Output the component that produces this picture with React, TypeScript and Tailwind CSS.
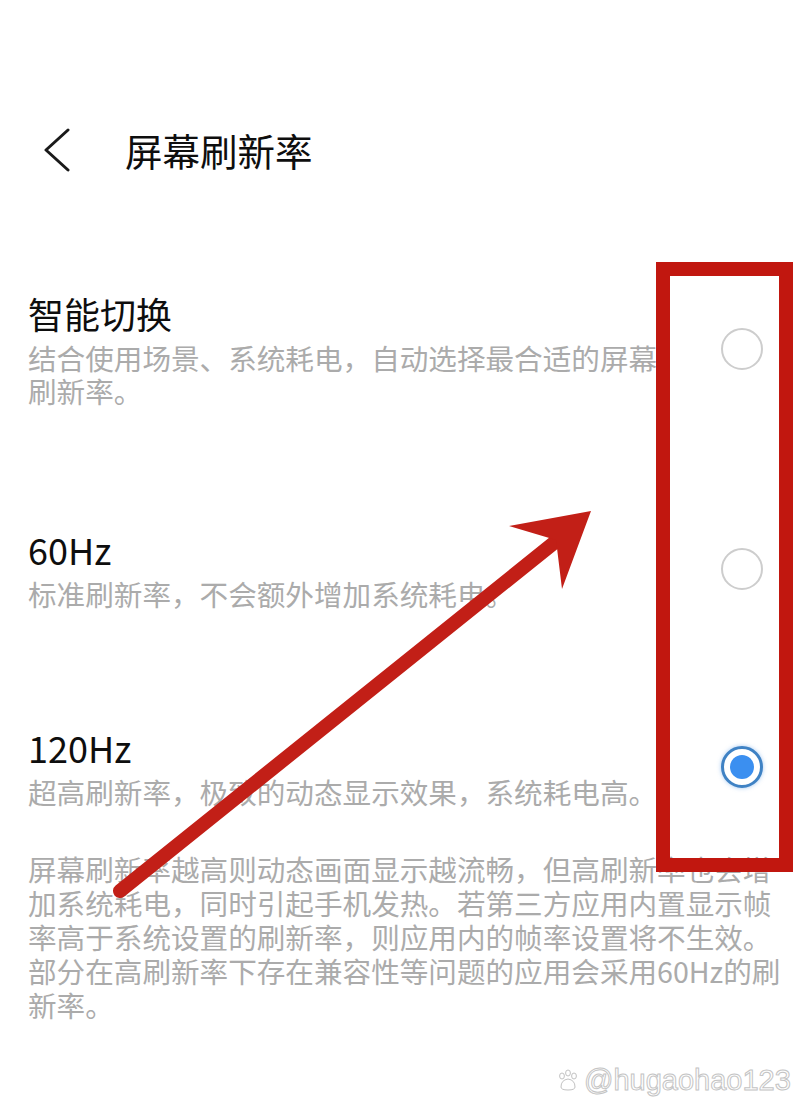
import React from "react";

const options = [
  {
    title: "智能切换",
    desc: "结合使用场景、系统耗电，自动选择最合适的屏幕刷新率。",
    selected: false,
    gap: "mt-[119px]",
  },
  {
    title: "60Hz",
    desc: "标准刷新率，不会额外增加系统耗电。",
    selected: false,
    gap: "mt-[120px]",
  },
  {
    title: "120Hz",
    desc: "超高刷新率，极致的动态显示效果，系统耗电高。",
    selected: true,
    gap: "mt-[115px]",
  },
];

function Radio({ checked }: { checked: boolean }) {
  if (checked) {
    return (
      <div className="w-[42px] h-[42px] rounded-full border-[3px] border-[#3f82c4] bg-white flex items-center justify-center shadow-[0_0_4px_rgba(80,150,230,0.5)]">
        <div className="w-[24px] h-[24px] rounded-full bg-[#3b8ff0]" />
      </div>
    );
  }
  return <div className="w-[42px] h-[42px] rounded-full border-[2.5px] border-[#cdcdcd]" />;
}

function Arrow() {
  return (
    <svg className="absolute inset-0 pointer-events-none" width="800" height="1118" viewBox="0 0 800 1118">
      <line x1="120" y1="891" x2="560" y2="538" stroke="#c21f17" strokeWidth="14" strokeLinecap="round" />
      <polygon points="591,511 509,526 556,540 562,589" fill="#c21f17" />
    </svg>
  );
}

export default function App() {
  return (
    <div className="relative w-[800px] h-[1118px] bg-white overflow-hidden font-['Noto_Sans_CJK_SC','Noto_Sans',sans-serif]">
      {/* header */}
      <div className="flex items-center h-[44px] mt-[128px]">
        <svg className="ml-[43px]" width="28" height="44" viewBox="0 0 28 44">
          <path d="M25 2 L3 22 L25 42" fill="none" stroke="#1a1a1a" strokeWidth="3" strokeLinecap="round" strokeLinejoin="round" />
        </svg>
        <h1 className="ml-[54px] text-[37.5px] leading-[44px] text-[#0e0e0e]">屏幕刷新率</h1>
      </div>

      {options.map((o) => (
        <div key={o.title} className={`${o.gap} flex items-center justify-between pl-[28px] pr-[37px]`}>
          <div className="w-[640px]">
            <p className="text-[36px] leading-[44px] text-[#0e0e0e]">{o.title}</p>
            <p className="mt-[6px] text-[28.6px] leading-[33px] text-[#ababab]">{o.desc}</p>
          </div>
          <Radio checked={o.selected} />
        </div>
      ))}

      <p className="mt-[44px] ml-[28px] w-[762px] text-[28.6px] leading-[34px] text-[#ababab]">
        屏幕刷新率越高则动态画面显示越流畅，但高刷新率也会增加系统耗电，同时引起手机发热。若第三方应用内置显示帧率高于系统设置的刷新率，则应用内的帧率设置将不生效。部分在高刷新率下存在兼容性等问题的应用会采用60Hz的刷新率。
      </p>

      {/* annotation overlay */}
      <div className="absolute left-[656px] top-[262px] w-[137px] h-[610px] border-[14px] border-[#c1170f]" />
      <Arrow />

      {/* watermark */}
      <div className="absolute left-[556px] top-[1064px] flex items-center gap-[4px]">
        <svg width="24" height="24" viewBox="0 0 24 24" fill="none" stroke="#c2c2c2" strokeWidth="1">
          <ellipse cx="6" cy="8" rx="2.4" ry="3" />
          <ellipse cx="12" cy="5" rx="2.4" ry="3" />
          <ellipse cx="18" cy="8" rx="2.4" ry="3" />
          <path d="M5 19 Q5 12 12 11 Q19 12 19 19 Q19 22 12 22 Q5 22 5 19 Z" />
        </svg>
        <span className="text-[29px] leading-[32px] font-['Liberation_Sans',sans-serif] text-transparent [-webkit-text-stroke:1px_#c4c4c4]">
          @hugaohao123
        </span>
      </div>
    </div>
  );
}
